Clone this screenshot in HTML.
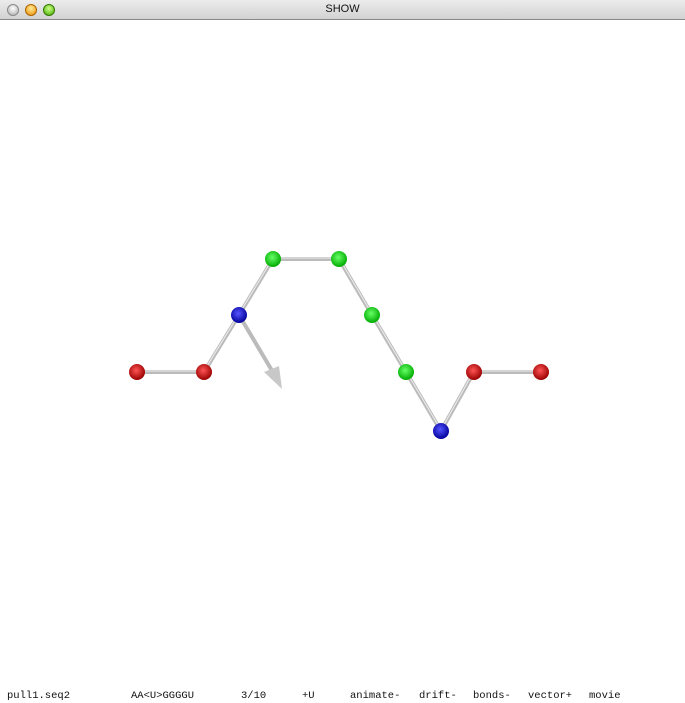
<!DOCTYPE html>
<html><head><style>
body{margin:0;width:685px;height:703px;overflow:hidden;background:#fff;font-family:"Liberation Sans",sans-serif}
.tb{position:absolute;left:0;top:0;width:685px;height:19px;background:linear-gradient(#ececec,#d2d2d2);border-bottom:1px solid #888}
.tb .t{position:absolute;left:0;right:0;top:3px;text-align:center;font-size:11px;color:#111}
.b{position:absolute;top:4px;width:11px;height:11px;border-radius:50%}
.st span{position:absolute;top:690px;font-family:"Liberation Mono",monospace;font-size:10.5px;color:#111}
</style></head><body>
<div class="tb"><div class="t">SHOW</div>
<div class="b" style="left:7px;background:radial-gradient(circle at 50% 35%,#fff,#aaa);border:1px solid #888;width:10px;height:10px"></div>
<div class="b" style="left:25px;background:radial-gradient(circle at 50% 35%,#fe9,#e80);border:1px solid #a60;width:10px;height:10px"></div>
<div class="b" style="left:43px;background:radial-gradient(circle at 50% 35%,#cf8,#4a0);border:1px solid #370;width:10px;height:10px"></div>
</div>
<svg width="685" height="703" style="position:absolute;left:0;top:0">
<defs>
<radialGradient id="r" cx="45%" cy="40%" r="60%"><stop offset="0" stop-color="#f55"/><stop offset="1" stop-color="#900"/></radialGradient>
<radialGradient id="g" cx="45%" cy="40%" r="60%"><stop offset="0" stop-color="#6f6"/><stop offset="1" stop-color="#0a0"/></radialGradient>
<radialGradient id="u" cx="45%" cy="40%" r="60%"><stop offset="0" stop-color="#55f"/><stop offset="1" stop-color="#009"/></radialGradient>
</defs>
<g stroke="#bbb" stroke-width="4" fill="none">
<polyline points="137,372 204,372 239,315 273,259 339,259 372,315 406,372 441,431 474,372 541,372"/>
<line x1="239" y1="315" x2="274" y2="374"/>
</g>
<g stroke="#eee" stroke-width="1" fill="none">
<polyline points="137,371 204,371 239,314 273,258 339,258 372,314 406,371 441,430 474,371 541,371"/>
</g>
<polygon points="264,372 282,389 279,366" fill="#c8c8c8"/>
<circle cx="137" cy="372" r="8" fill="url(#r)"/>
<circle cx="204" cy="372" r="8" fill="url(#r)"/>
<circle cx="239" cy="315" r="8" fill="url(#u)"/>
<circle cx="273" cy="259" r="8" fill="url(#g)"/>
<circle cx="339" cy="259" r="8" fill="url(#g)"/>
<circle cx="372" cy="315" r="8" fill="url(#g)"/>
<circle cx="406" cy="372" r="8" fill="url(#g)"/>
<circle cx="441" cy="431" r="8" fill="url(#u)"/>
<circle cx="474" cy="372" r="8" fill="url(#r)"/>
<circle cx="541" cy="372" r="8" fill="url(#r)"/>
</svg>
<div class="st">
<span style="left:7px">pull1.seq2</span>
<span style="left:131px">AA&lt;U&gt;GGGGU</span>
<span style="left:241px">3/10</span>
<span style="left:302px">+U</span>
<span style="left:350px">animate-</span>
<span style="left:419px">drift-</span>
<span style="left:473px">bonds-</span>
<span style="left:528px">vector+</span>
<span style="left:589px">movie</span>
</div>
</body></html>
